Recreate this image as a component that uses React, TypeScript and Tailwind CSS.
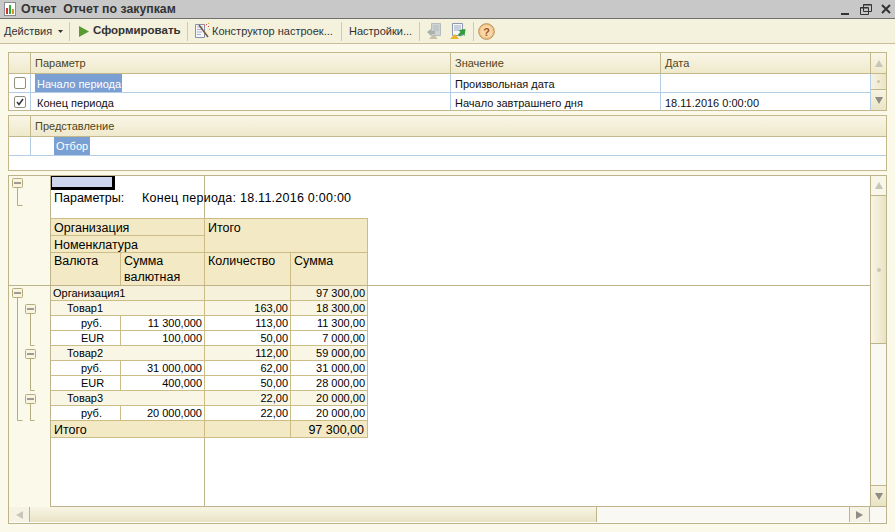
const headerCell = "flex items-center border-r border-[#c2b88c] bg-gradient-to-b from-[#f9f6e8] to-[#efe9cb] pl-1 text-[#4f4520]";

function ReportIcon() {
  return (
    <svg width="14" height="14" viewBox="0 0 14 14" className="ml-[3px]">
      <rect x="1.5" y="0.5" width="11" height="13" fill="#fff" stroke="#8a8a8a" />
      <rect x="3" y="6" width="2" height="6" fill="#c33" />
      <rect x="6" y="3" width="2" height="9" fill="#3a3" />
      <rect x="9" y="7" width="2" height="5" fill="#c93" />
    </svg>
  );
}

function WandIcon() {
  return (
    <svg width="15" height="16" viewBox="0 0 15 16">
      <path d="M0.5 1.5h9v13h-9z" fill="#f4f6fa" stroke="#8793ad" />
      <path d="M2 4h6M2 6.500h6M2 9h5M2 11.500h4" stroke="#a5b3cf" />
      <path d="M4 2l9 12" stroke="#7a5a3a" strokeWidth="1.600" />
      <path d="M11 1h1v1h-1zM13 3h1v1h-1zM9 2h1v1H9z" fill="#d44" />
      <path d="M13 0h1v1h-1zM14 6h1v1h-1z" fill="#e6a020" />
    </svg>
  );
}

function DocGrey() {
  return (
    <svg width="17" height="17" viewBox="0 0 17 17">
      <path d="M5.500 0.500h9v12h-9z" fill="#cfd5d6" stroke="#b5bcbc" />
      <path d="M7 3h6M7 5h6M7 7h6" stroke="#b2baba" />
      <path d="M1 9l4-3v2h4v3H5v2z" fill="#a9b2ab" />
      <path d="M8 11l3.500 5H3z" fill="#c6c1a6" />
    </svg>
  );
}

function DocGreen() {
  return (
    <svg width="17" height="17" viewBox="0 0 17 17">
      <path d="M2.500 0.500h10v12h-10z" fill="#f5f7fb" stroke="#8d99b0" />
      <path d="M4 3h7M4 5h7M4 7h5" stroke="#9ba9c5" />
      <path d="M15.500 6l-1 7-2-2-2.500 2.500-2-2 2.500-2.500-2-2z" fill="#2f9e3a" />
      <path d="M5 11l4 5H0z" fill="#e8b52c" />
    </svg>
  );
}

function HelpIcon() {
  return (
    <svg width="17" height="17" viewBox="0 0 17 17">
      <circle cx="8.500" cy="8.500" r="7.800" fill="#f2c98c" stroke="#b98a50" />
      <circle cx="8.500" cy="8.500" r="5.800" fill="#f6d9a9" />
      <text x="8.500" y="12.500" textAnchor="middle" fontSize="11" fontWeight="700" fill="#a5561c" fontFamily="Liberation Sans, sans-serif">?</text>
    </svg>
  );
}

function Separator() {
  return <div className="h-[19px] w-px bg-[#d3cba8]" />;
}

function Check({ checked }: { checked?: boolean }) {
  return (
    <div className="flex h-[12px] w-[12px] items-center justify-center rounded-[2px] border border-[#8f8f80] bg-white">
      {checked && (
        <svg width="8" height="8" viewBox="0 0 8 8">
          <path d="M1 4l2 2.500L7 1" fill="none" stroke="#333" strokeWidth="1.500" />
        </svg>
      )}
    </div>
  );
}

function Arrow({ dir, color = "#c8c6b4" }: { dir: "up" | "down" | "left" | "right"; color?: string }) {
  const d = { up: "M0 7L4 0l4 7z", down: "M0 0h8L4 7z", left: "M7 0v8L0 4z", right: "M0 0v8l7-4z" }[dir];
  return (
    <svg width={dir === "up" || dir === "down" ? 8 : 7} height={dir === "up" || dir === "down" ? 7 : 8}>
      <path d={d} fill={color} />
    </svg>
  );
}

function SmallScroll() {
  return (
    <div className="flex w-[15px] flex-col">
      <div className="flex h-[21px] items-center justify-center border-b border-[#c2b88c] bg-gradient-to-b from-[#f9f6e8] to-[#efe9cb]">
        <Arrow dir="up" />
      </div>
      <div className="flex h-[16px] items-center justify-center border-b border-[#c2b88c] bg-gradient-to-r from-[#f6f3e2] to-[#ebe5c6]">
        <div className="h-[3px] w-[3px] rounded-full bg-[#c9c6b2]" />
      </div>
      <div className="flex flex-1 items-center justify-center bg-gradient-to-b from-[#f6f3e2] to-[#ebe5c6]">
        <Arrow dir="down" color="#8d8d85" />
      </div>
    </div>
  );
}

const rows = [
  { kind: "org", name: "Организация1", sum: "", qty: "", total: "97 300,00" },
  { kind: "item", name: "Товар1", sum: "", qty: "163,00", total: "18 300,00" },
  { kind: "cur", name: "руб.", sum: "11 300,000", qty: "113,00", total: "11 300,00" },
  { kind: "cur", name: "EUR", sum: "100,000", qty: "50,00", total: "7 000,00" },
  { kind: "item", name: "Товар2", sum: "", qty: "112,00", total: "59 000,00" },
  { kind: "cur", name: "руб.", sum: "31 000,000", qty: "62,00", total: "31 000,00" },
  { kind: "cur", name: "EUR", sum: "400,000", qty: "50,00", total: "28 000,00" },
  { kind: "item", name: "Товар3", sum: "", qty: "22,00", total: "20 000,00" },
  { kind: "cur", name: "руб.", sum: "20 000,000", qty: "22,00", total: "20 000,00" },
];

const cell = "border-r border-b border-[#cbbd85] leading-[14px]";

function ReportRow({ row }: { row: (typeof rows)[number] }) {
  const bg = row.kind === "org" ? "bg-[#f6f1db]" : row.kind === "item" ? "bg-[#faf6e6]" : "bg-white";
  return (
    <div className={`grid h-[15px] w-[317px] grid-cols-[70px_84px_86px_77px] text-[11px] text-black ${bg}`}>
      {row.kind === "cur" ? (
        <>
          <div className={`${cell} pl-[30px]`}>{row.name}</div>
          <div className={`${cell} pr-[2px] text-right`}>{row.sum}</div>
        </>
      ) : (
        <div className={`${cell} col-span-2 ${row.kind === "org" ? "pl-[2px]" : "pl-[16px]"}`}>{row.name}</div>
      )}
      <div className={`${cell} pr-[2px] text-right`}>{row.qty}</div>
      <div className={`${cell} pr-[2px] text-right`}>{row.total}</div>
    </div>
  );
}

function TreeBox({ x, y }: { x: number; y: number }) {
  return (
    <g>
      <rect x={x + 0.5} y={y + 0.5} width="10" height="9" rx="1" fill="#f8f4df" stroke="#b5ab7c" />
      <path d={`M${x + 2} ${y + 5}h7`} stroke="#444" />
    </g>
  );
}

export default function App() {
  return (
    <div className="flex h-[532px] w-[895px] flex-col overflow-hidden bg-[#fbf9ea] text-[11px] text-[#111] [font-family:'Liberation_Sans',sans-serif]">
      {/* Title */}
      <div className="flex h-[19px] items-center border-b border-[#6f6f6f] bg-[#c8c8c8]">
        <ReportIcon />
        <span className="ml-[4px] text-[12.3px] font-bold whitespace-pre text-[#333]">Отчет  Отчет по закупкам</span>
        <div className="ml-auto mr-[4px] flex items-center gap-[9px]">
          <svg width="9" height="11" viewBox="0 0 9 11"><path d="M0 9h8v2H0z" fill="#333" /></svg>
          <svg width="12" height="11" viewBox="0 0 12 11" className="ml-[1px]">
            <path d="M3.500 0.500h8v7h-8zM0.500 3.500h8v7h-8z" fill="#c8c8c8" stroke="#333" />
            <path d="M3 1h8M0 4h8" stroke="#333" />
          </svg>
          <svg width="10" height="10" viewBox="0 0 10 10"><path d="M1 1l8 8M9 1l-8 8" stroke="#333" strokeWidth="2" /></svg>
        </div>
      </div>

      {/* Toolbar */}
      <div className="flex h-[25px] items-center border-b border-[#c9c09a] bg-[#f4f1dd]">
        <span className="ml-[4px] w-[49px] text-[#333]">Действия</span>
        <svg width="5" height="3" className="ml-[5px]"><path d="M0 0h5L2.500 3z" fill="#333" /></svg>
        <div className="ml-[6px]"><Separator /></div>
        <svg width="10" height="11" className="ml-[9px]"><path d="M0 0l10 5.500L0 11z" fill="#5a9a32" /></svg>
        <span className="ml-[4px] w-[89px] text-[11.500px] font-bold whitespace-nowrap text-[#333]">Сформировать</span>
        <div className="ml-[5px]"><Separator /></div>
        <div className="ml-[7px]"><WandIcon /></div>
        <span className="ml-[2px] w-[122px] text-[#333]">Конструктор настроек...</span>
        <div className="ml-[7px]"><Separator /></div>
        <span className="ml-[7px] w-[65px] text-[#333]">Настройки...</span>
        <div className="ml-[5px]"><Separator /></div>
        <div className="ml-[6px]"><DocGrey /></div>
        <div className="ml-[7px]"><DocGreen /></div>
        <div className="ml-[6px]"><Separator /></div>
        <div className="ml-[4px]"><HelpIcon /></div>
      </div>

      {/* Parameters */}
      <div className="ml-[8px] mt-[8px] flex h-[59px] w-[879px] border border-[#c2b88c] bg-white">
        <div className="flex flex-col">
          <div className="grid h-[21px] grid-cols-[22px_420px_210px_210px] border-b border-[#c2b88c]">
            <div className={headerCell} />
            <div className={headerCell}>Параметр</div>
            <div className={headerCell}>Значение</div>
            <div className={headerCell}>Дата</div>
          </div>
          <div className="grid h-[19px] grid-cols-[22px_420px_210px_210px] grid-rows-[18px] border-b border-[#b3cde6]">
            <div className="flex items-center justify-center border-r border-[#b3cde6]"><Check /></div>
            <div className="border-r border-[#b3cde6] pl-[4px]">
              <span className="inline-block h-[18px] bg-[#7a9fd2] pl-[2px] pr-[1px] leading-[20px] text-white">Начало периода</span>
            </div>
            <div className="border-r border-[#b3cde6] pl-[4px] leading-[20px]">Произвольная дата</div>
            <div className="border-r border-[#b3cde6]" />
          </div>
          <div className="grid h-[17px] grid-cols-[22px_420px_210px_210px] grid-rows-[17px]">
            <div className="flex items-center justify-center border-r border-[#b3cde6]"><Check checked /></div>
            <div className="border-r border-[#b3cde6] pl-[6px] leading-[20px]">Конец периода</div>
            <div className="border-r border-[#b3cde6] pl-[4px] leading-[20px]">Начало завтрашнего дня</div>
            <div className="border-r border-[#b3cde6] pl-[4px] leading-[20px]">18.11.2016 0:00:00</div>
          </div>
        </div>
        <SmallScroll />
      </div>

      {/* Filter */}
      <div className="ml-[8px] mt-[4px] flex h-[56px] w-[879px] flex-col border border-[#c2b88c] bg-white">
        <div className="flex h-[21px] border-b border-[#c2b88c]">
          <div className={`${headerCell} w-[22px]`} />
          <div className={`${headerCell} flex-1 border-r-0`}>Представление</div>
        </div>
        <div className="flex h-[19px] border-b border-[#b3cde6]">
          <div className="w-[22px] border-r border-[#b3cde6]" />
          <div className="pl-[23px]">
            <span className="inline-block h-[18px] bg-[#7a9fd2] px-[2px] leading-[18px] text-white">Отбор</span>
          </div>
        </div>
      </div>

      {/* Report */}
      <div className="ml-[8px] mt-[4px] flex h-[349px] w-[879px] flex-col border border-[#bdb48c] bg-white">
        <div className="flex h-[331px] border-b border-[#bdb48c]">
          <div className="flex w-[861px] flex-col">
            <div className="flex h-[110px] border-b border-[#bdb48c]">
              <div className="w-[42px] border-r border-[#bdb48c] bg-[#fbf9ea]">
                <svg width="41" height="109" viewBox="9 176 41 109">
                  <path d="M17.500 188v17.500h5" fill="none" stroke="#b5ab7c" />
                  <TreeBox x={12} y={178} />
                </svg>
              </div>
              <div className="flex flex-col">
                <div className="relative h-[42px] w-[154px] border-r border-[#bdb48c]">
                  <div className="h-[14px] w-[64px] border border-r-[3px] border-b-[3px] border-black bg-[#ced6ee]" />
                  <div className="absolute left-[3px] top-[15px] flex h-[14px] whitespace-nowrap text-[12.500px] leading-[14px] text-black">
                    <span className="w-[88px]">Параметры:</span>
                    <span className="tracking-[0.25px]">Конец периода: 18.11.2016 0:00:00</span>
                  </div>
                </div>
                <div className="grid h-[67px] w-[317px] grid-cols-[70px_84px_86px_77px] grid-rows-[18px_17px_32px] bg-[#f3eac5] text-[12.500px] leading-[14px] text-black">
                  <div className="col-span-2 border-r border-b border-t border-[#cbbd85] pl-[3px] pt-[2px]">Организация</div>
                  <div className="col-span-2 row-span-2 border-r border-b border-t border-[#cbbd85] pl-[3px] pt-[2px]">Итого</div>
                  <div className="col-span-2 border-r border-b border-[#cbbd85] pl-[3px] pt-[2px]">Номенклатура</div>
                  <div className="border-r border-[#cbbd85] pl-[3px] pt-[1px]">Валюта</div>
                  <div className="border-r border-[#cbbd85] pl-[3px] leading-[16px]">Сумма<br />валютная</div>
                  <div className="border-r border-[#cbbd85] pl-[3px] pt-[1px]">Количество</div>
                  <div className="border-r border-[#cbbd85] pl-[3px] pt-[1px]">Сумма</div>
                </div>
              </div>
            </div>
            <div className="flex flex-1">
              <div className="w-[42px] border-r border-[#bdb48c] bg-[#fbf9ea]">
                <svg width="41" height="221" viewBox="9 286 41 221">
                  <path d="M17.500 298v122.500h5M30.500 313v32.500h4M30.500 358v32.500h4M30.500 403v17.500h4" fill="none" stroke="#b5ab7c" />
                  <TreeBox x={12} y={288} />
                  <TreeBox x={25} y={304} />
                  <TreeBox x={25} y={349} />
                  <TreeBox x={25} y={394} />
                </svg>
              </div>
              <div className="flex flex-col">
                {rows.map((row, i) => (
                  <ReportRow key={i} row={row} />
                ))}
                <div className="grid h-[17px] w-[317px] grid-cols-[154px_86px_77px] grid-rows-[17px] bg-[#f3eac5] text-[12.500px] leading-[18px] text-black">
                  <div className="border-r border-b border-[#cbbd85] pl-[3px]">Итого</div>
                  <div className="border-r border-b border-[#cbbd85]" />
                  <div className="border-r border-b border-[#cbbd85] pr-[3px] text-right">97 300,00</div>
                </div>
                <div className="w-[154px] flex-1 border-r border-[#bdb48c]" />
              </div>
            </div>
          </div>
          <div className="flex w-[16px] flex-col border-l border-[#bdb48c]">
            <div className="flex h-[20px] items-center justify-center border-b border-[#bdb48c] bg-[#f9f7ea]">
              <Arrow dir="up" />
            </div>
            <div className="flex h-[148px] items-center justify-center border-b border-[#bdb48c] bg-gradient-to-r from-[#f8f5e6] to-[#e9e3c4]">
              <div className="h-[4px] w-[4px] rounded-full bg-[#c9c6b2]" />
            </div>
            <div className="flex-1 bg-[#f9f8f2]" />
            <div className="flex h-[21px] items-center justify-center border-t border-[#bdb48c] bg-gradient-to-b from-[#f6f3e2] to-[#e9e3c4]">
              <Arrow dir="down" color="#8d8d85" />
            </div>
          </div>
        </div>
        <div className="flex h-[15px]">
          <div className="flex w-[21px] items-center justify-center border-r border-[#bdb48c] bg-[#f6f3e4]">
            <Arrow dir="left" />
          </div>
          <div className="w-[567px] border-r border-[#bdb48c] bg-gradient-to-b from-[#f8f5e6] to-[#e9e3c4]" />
          <div className="flex-1 bg-[#f9f8f2]" />
          <div className="flex w-[21px] items-center justify-center border-l border-r border-[#bdb48c] bg-[#f6f3e4]">
            <Arrow dir="right" color="#8d8d85" />
          </div>
          <div className="w-[16px] bg-[#f9f8f2]" />
        </div>
      </div>
    </div>
  );
}
